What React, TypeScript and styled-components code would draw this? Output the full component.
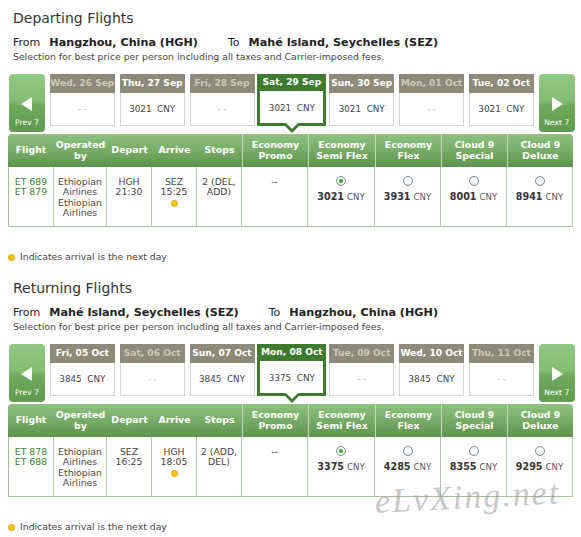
import React from 'react';
import styled, { createGlobalStyle, css } from 'styled-components';

const GlobalStyle = createGlobalStyle`
  html, body { margin: 0; padding: 0; background: #fff; }
  body { font-family: "DejaVu Sans", Verdana, sans-serif; color: #444; }
  * { box-sizing: border-box; }
`;

const COLS = '46px 53px 45px 45px 45px 66px 67px 66px 66px 66px';

const Page = styled.div`
  position: relative;
  width: 581px;
  height: 537px;
  overflow: hidden;
  padding-top: 9px;
`;

const Section = styled.section<{ $top: number }>`
  margin-top: ${(p) => p.$top}px;
`;

const Title = styled.h2`
  margin: 0 0 0 13px;
  font-size: 14px;
  font-weight: normal;
  line-height: 18px;
  color: #333;
`;

const Route = styled.div`
  display: flex;
  align-items: baseline;
  margin: 9px 0 0 13px;
  font-size: 11px;
  line-height: 14px;
  color: #222;
  white-space: nowrap;
`;

const Place = styled.b`
  font-weight: bold;
  font-size: 11.2px;
  margin-left: 9px;
`;

const ToLabel = styled.span`
  margin-left: 30px;
`;

const Note = styled.div`
  margin: 1px 0 0 13px;
  font-size: 9.3px;
  line-height: 12px;
  color: #444;
  white-space: nowrap;
`;

const Strip = styled.div`
  display: flex;
  align-items: flex-start;
  gap: 4.85px;
  height: 60px;
  margin: 11px 0 0 9px;
`;

const NavButton = styled.div`
  width: 36px;
  height: 58px;
  flex: none;
  border-radius: 4px;
  background: linear-gradient(#92c982 0%, #84bd73 45%, #6ea95e 55%, #5f9a4f 100%);
  display: flex;
  flex-direction: column;
  align-items: center;
  padding-top: 23px;
  color: #fff;
  font-size: 7.6px;
  line-height: 10px;
`;

const Arrow = styled.span<{ $dir: 'left' | 'right' }>`
  width: 0;
  height: 0;
  border-top: 7px solid transparent;
  border-bottom: 7px solid transparent;
  ${(p) =>
    p.$dir === 'left'
      ? css`border-right: 11px solid #fff; margin-left: -1px;`
      : css`border-left: 11px solid #fff; margin-left: 2px;`}
`;

const NavLabel = styled.span`
  margin-top: 7px;
`;

const Tab = styled.div<{ $selected: boolean }>`
  position: relative;
  flex: none;
  width: 65px;
  height: 52px;
  display: flex;
  flex-direction: column;
  ${(p) =>
    p.$selected &&
    css`
      width: 69px;
      margin: 0 -2px;
      background: #3e7b2f;
    `}
`;

const TabHead = styled.div<{ $selected: boolean; $off: boolean }>`
  height: ${(p) => (p.$selected ? 17 : 19)}px;
  flex: none;
  background: ${(p) => (p.$selected ? '#3e7b2f' : '#8d8a79')};
  color: ${(p) => (p.$off ? '#cbc9bb' : '#fff')};
  font-size: 9.1px;
  font-weight: bold;
  line-height: ${(p) => (p.$selected ? 17 : 19)}px;
  text-align: center;
  white-space: nowrap;
  overflow: hidden;
`;

const TabBody = styled.div<{ $selected: boolean; $off: boolean }>`
  flex: 1;
  display: flex;
  align-items: center;
  justify-content: center;
  background: #fff;
  white-space: pre;
  font-size: ${(p) => (p.$off ? 8 : 8.8)}px;
  color: ${(p) => (p.$off ? '#b5b5b5' : '#444')};
  ${(p) =>
    p.$selected
      ? css`
          margin: 0 3px 3px;
          padding-top: 1px;
        `
      : css`
          border: 1px solid #d4d4d4;
          border-top: none;
        `}
`;

const PointerOuter = styled.span`
  position: absolute;
  left: 50%;
  top: 49px;
  margin-left: -10px;
  width: 0;
  height: 0;
  border-left: 10px solid transparent;
  border-right: 10px solid transparent;
  border-top: 10px solid #3e7b2f;
`;

const PointerInner = styled.span`
  position: absolute;
  left: 50%;
  top: 48px;
  margin-left: -7px;
  width: 0;
  height: 0;
  border-left: 7px solid transparent;
  border-right: 7px solid transparent;
  border-top: 7px solid #fff;
`;

const HeadRow = styled.div`
  display: grid;
  grid-template-columns: ${COLS};
  height: 33px;
  margin-left: 8px;
  width: 565px;
  border-radius: 4px 4px 0 0;
  background: linear-gradient(#8ec17e 0%, #77ad67 50%, #5d924d 100%);
  overflow: hidden;
`;

const HeadCell = styled.div<{ $sep: boolean }>`
  display: flex;
  align-items: center;
  justify-content: center;
  text-align: center;
  color: #fff;
  font-weight: bold;
  font-size: 9.4px;
  line-height: 10.5px;
  border-left: ${(p) => (p.$sep ? '1px solid #c3dcbb' : 'none')};
`;

const BodyRow = styled.div`
  display: grid;
  grid-template-columns: ${COLS};
  height: 60px;
  margin-left: 8px;
  width: 565px;
`;

const BodyCell = styled.div<{ $first: boolean }>`
  padding-top: 10px;
  text-align: center;
  font-size: 9.3px;
  line-height: 10.3px;
  color: #444;
  border-right: 1px solid #b3cba8;
  border-bottom: 1px solid #a4bf98;
  border-left: ${(p) => (p.$first ? '1px solid #a4bf98' : 'none')};
`;

const FlightNo = styled.div`
  color: #3d7f2e;
`;

const FareCell = styled(BodyCell)`
  display: flex;
  flex-direction: column;
  align-items: center;
  padding-top: 9px;
`;

const Radio = styled.span<{ $checked: boolean }>`
  width: 10px;
  height: 10px;
  border-radius: 50%;
  border: 1px solid #7d8c9a;
  background: radial-gradient(circle at 50% 35%, #ffffff 0%, #f2f2f2 60%, #dcdcdc 100%);
  display: flex;
  align-items: center;
  justify-content: center;
  &::after {
    content: '';
    width: 4px;
    height: 4px;
    border-radius: 50%;
    background: ${(p) => (p.$checked ? '#3aa232' : 'transparent')};
  }
`;

const Price = styled.div`
  margin-top: 5px;
  line-height: 12px;
  white-space: nowrap;
`;

const Amount = styled.b`
  font-size: 9.6px;
  font-weight: bold;
  color: #333;
`;

const Currency = styled.span`
  font-size: 8.6px;
  color: #555;
`;

const Dot = styled.span`
  display: inline-block;
  width: 7px;
  height: 7px;
  border-radius: 50%;
  background: #f7c81a;
  border: 1px solid #e0a000;
`;

const DotLine = styled.div`
  margin-top: 2px;
  line-height: 8px;
`;

const Legend = styled.div`
  display: flex;
  align-items: center;
  gap: 5px;
  margin: 24px 0 0 8px;
  font-size: 9.3px;
  line-height: 12px;
  color: #444;
`;

const Watermark = styled.div`
  position: absolute;
  left: 376px;
  top: 482px;
  font-family: "Liberation Serif", serif;
  font-style: italic;
  font-size: 34px;
  line-height: 40px;
  letter-spacing: 2px;
  color: rgba(150, 150, 150, 0.55);
  transform: rotate(-3deg);
  transform-origin: left bottom;
  pointer-events: none;
  white-space: nowrap;
`;

type DateTab = { label: string; price?: string; selected?: boolean };
type Fare = { price: string; checked?: boolean };
type Flight = {
  numbers: string[];
  depart: [string, string];
  arrive: [string, string];
  stops: string;
  fares: Fare[];
};

type Leg = {
  title: string;
  from: string;
  to: string;
  dates: DateTab[];
  flight: Flight;
};

const HEADERS: { lines: string[]; sep: boolean }[] = [
  { lines: ['Flight'], sep: false },
  { lines: ['Operated', 'by'], sep: false },
  { lines: ['Depart'], sep: false },
  { lines: ['Arrive'], sep: false },
  { lines: ['Stops'], sep: false },
  { lines: ['Economy', 'Promo'], sep: true },
  { lines: ['Economy', 'Semi Flex'], sep: true },
  { lines: ['Economy', 'Flex'], sep: true },
  { lines: ['Cloud 9', 'Special'], sep: true },
  { lines: ['Cloud 9', 'Deluxe'], sep: true },
];

const legs: Leg[] = [
  {
    title: 'Departing Flights',
    from: 'Hangzhou, China (HGH)',
    to: 'Mahé Island, Seychelles (SEZ)',
    dates: [
      { label: 'Wed, 26 Sep' },
      { label: 'Thu, 27 Sep', price: '3021' },
      { label: 'Fri, 28 Sep' },
      { label: 'Sat, 29 Sep', price: '3021', selected: true },
      { label: 'Sun, 30 Sep', price: '3021' },
      { label: 'Mon, 01 Oct' },
      { label: 'Tue, 02 Oct', price: '3021' },
    ],
    flight: {
      numbers: ['ET 689', 'ET 879'],
      depart: ['HGH', '21:30'],
      arrive: ['SEZ', '15:25'],
      stops: '2 (DEL, ADD)',
      fares: [
        { price: '3021', checked: true },
        { price: '3931' },
        { price: '8001' },
        { price: '8941' },
      ],
    },
  },
  {
    title: 'Returning Flights',
    from: 'Mahé Island, Seychelles (SEZ)',
    to: 'Hangzhou, China (HGH)',
    dates: [
      { label: 'Fri, 05 Oct', price: '3845' },
      { label: 'Sat, 06 Oct' },
      { label: 'Sun, 07 Oct', price: '3845' },
      { label: 'Mon, 08 Oct', price: '3375', selected: true },
      { label: 'Tue, 09 Oct' },
      { label: 'Wed, 10 Oct', price: '3845' },
      { label: 'Thu, 11 Oct' },
    ],
    flight: {
      numbers: ['ET 878', 'ET 688'],
      depart: ['SEZ', '16:25'],
      arrive: ['HGH', '18:05'],
      stops: '2 (ADD, DEL)',
      fares: [
        { price: '3375', checked: true },
        { price: '4285' },
        { price: '8355' },
        { price: '9295' },
      ],
    },
  },
];

function LegSection({ leg, top }: { leg: Leg; top: number }) {
  const f = leg.flight;
  return (
    <Section $top={top}>
      <Title>{leg.title}</Title>
      <Route>
        <span>From</span>
        <Place>{leg.from}</Place>
        <ToLabel>To</ToLabel>
        <Place>{leg.to}</Place>
      </Route>
      <Note>Selection for best price per person including all taxes and Carrier-imposed fees.</Note>
      <Strip>
        <NavButton>
          <Arrow $dir="left" />
          <NavLabel>Prev 7</NavLabel>
        </NavButton>
        {leg.dates.map((d) => {
          const sel = !!d.selected;
          const off = !d.price;
          return (
            <Tab key={d.label} $selected={sel}>
              <TabHead $selected={sel} $off={off}>{d.label}</TabHead>
              <TabBody $selected={sel} $off={off}>{off ? '- -' : `${d.price}  CNY`}</TabBody>
              {sel && (
                <>
                  <PointerOuter />
                  <PointerInner />
                </>
              )}
            </Tab>
          );
        })}
        <NavButton>
          <Arrow $dir="right" />
          <NavLabel>Next 7</NavLabel>
        </NavButton>
      </Strip>
      <HeadRow>
        {HEADERS.map((h) => (
          <HeadCell key={h.lines.join(' ')} $sep={h.sep}>
            <div>
              {h.lines.map((l) => (
                <div key={l}>{l}</div>
              ))}
            </div>
          </HeadCell>
        ))}
      </HeadRow>
      <BodyRow>
        <BodyCell $first>
          {f.numbers.map((n) => (
            <FlightNo key={n}>{n}</FlightNo>
          ))}
        </BodyCell>
        <BodyCell $first={false}>
          Ethiopian
          <br />
          Airlines
          <br />
          Ethiopian
          <br />
          Airlines
        </BodyCell>
        <BodyCell $first={false}>
          {f.depart[0]}
          <br />
          {f.depart[1]}
        </BodyCell>
        <BodyCell $first={false}>
          {f.arrive[0]}
          <br />
          {f.arrive[1]}
          <DotLine>
            <Dot />
          </DotLine>
        </BodyCell>
        <BodyCell $first={false}>{f.stops}</BodyCell>
        <BodyCell $first={false}>--</BodyCell>
        {f.fares.map((fare) => (
          <FareCell key={fare.price} $first={false}>
            <Radio $checked={!!fare.checked} />
            <Price>
              <Amount>{fare.price}</Amount> <Currency>CNY</Currency>
            </Price>
          </FareCell>
        ))}
      </BodyRow>
      <Legend>
        <Dot />
        <span>Indicates arrival is the next day</span>
      </Legend>
    </Section>
  );
}

export default function App() {
  return (
    <>
      <GlobalStyle />
      <Page>
        <LegSection leg={legs[0]} top={0} />
        <LegSection leg={legs[1]} top={16} />
        <Watermark>eLvXing.net</Watermark>
      </Page>
    </>
  );
}
